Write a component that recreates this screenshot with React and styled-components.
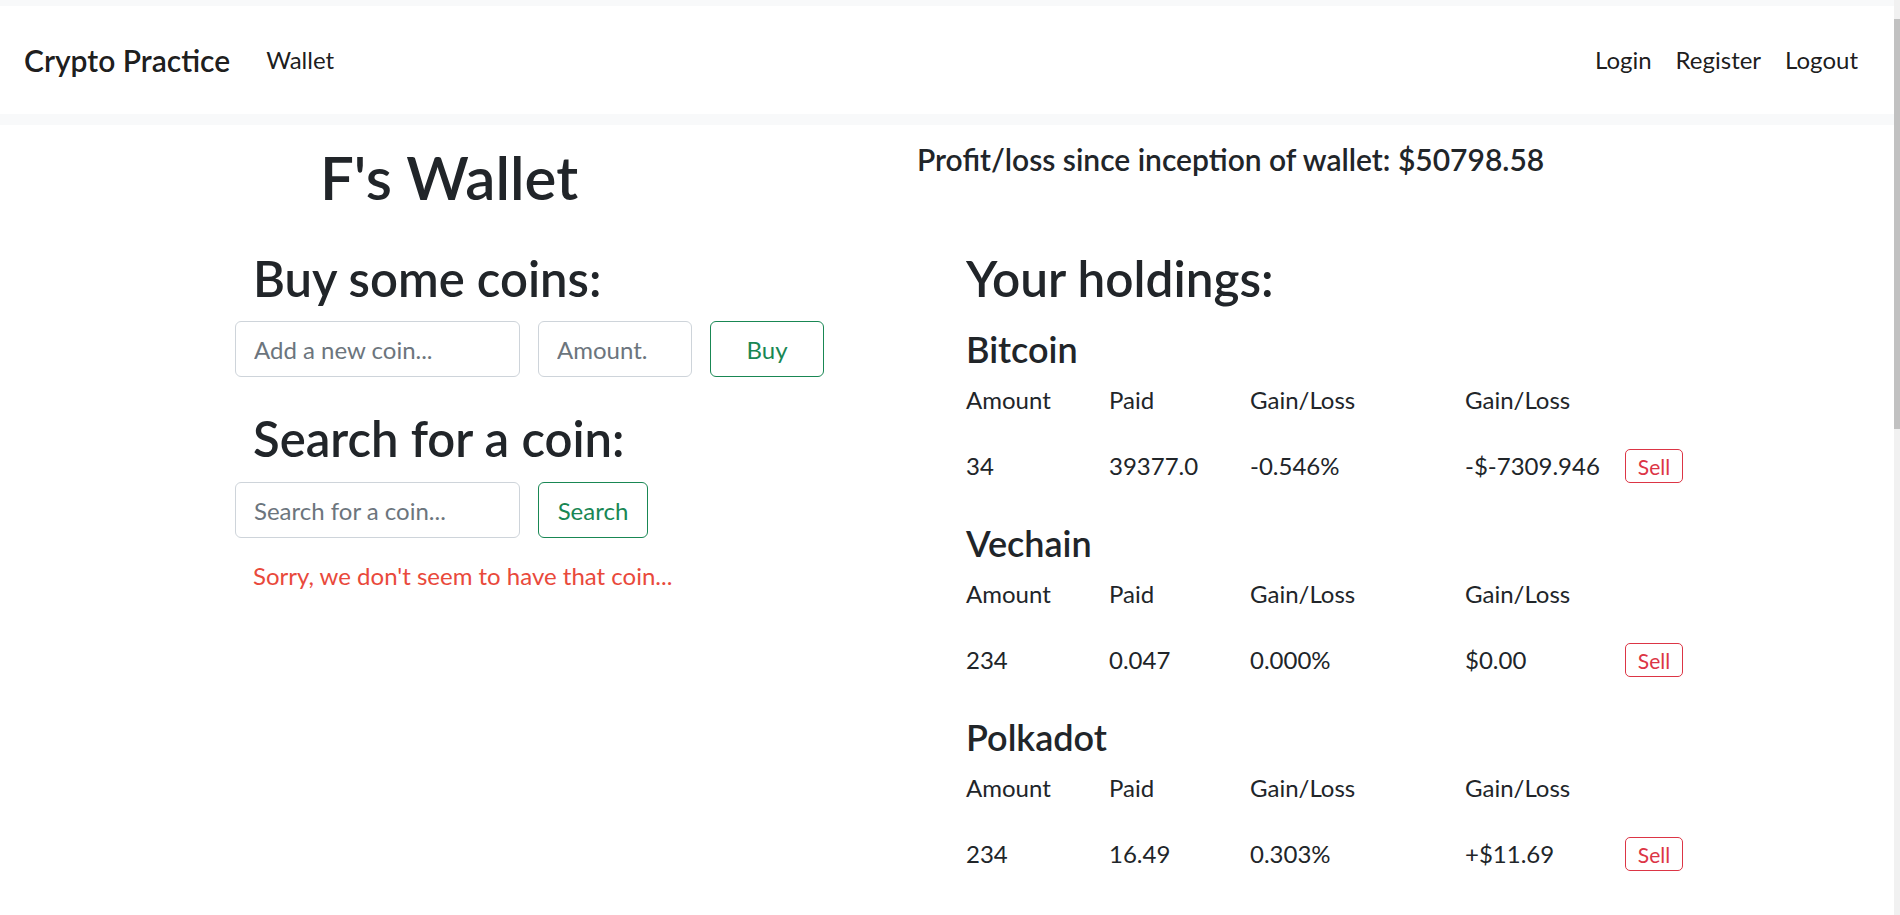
import styled, { createGlobalStyle } from 'styled-components'

const GlobalStyle = createGlobalStyle`
  * { box-sizing: border-box; }
  html, body {
    margin: 0;
    padding: 0;
    background: #fff;
  }
  body {
    font-family: Lato, "Liberation Sans", sans-serif;
    font-size: 24px;
    line-height: 1.5;
    color: #212529;
  }
`

const holdings = [
  { name: 'Bitcoin', amount: '34', paid: '39377.0', pct: '-0.546%', value: '-$-7309.946' },
  { name: 'Vechain', amount: '234', paid: '0.047', pct: '0.000%', value: '$0.00' },
  { name: 'Polkadot', amount: '234', paid: '16.49', pct: '0.303%', value: '+$11.69' }
]

const App = () => {
  return (
    <Page>
      <GlobalStyle />
      <NavOuter>
        <NavBar>
          <NavGroup>
            <Brand>Crypto Practice</Brand>
            <NavLink>Wallet</NavLink>
          </NavGroup>
          <NavGroup>
            <NavLink>Login</NavLink>
            <NavLink>Register</NavLink>
            <NavLink>Logout</NavLink>
          </NavGroup>
        </NavBar>
      </NavOuter>

      <Main>
        <TopRow>
          <TitleCell>
            <Title>F's Wallet</Title>
          </TitleCell>
          <Profit>Profit/loss since inception of wallet: $50798.58</Profit>
        </TopRow>

        <ContentRow>
          <LeftCol>
            <SectionHeading>Buy some coins:</SectionHeading>
            <FormRow>
              <Input placeholder='Add a new coin...' width={285} />
              <Input placeholder='Amount.' width={154} />
              <OutlineButton width={114}>Buy</OutlineButton>
            </FormRow>

            <SectionHeading spaced>Search for a coin:</SectionHeading>
            <FormRow>
              <Input placeholder='Search for a coin...' width={285} />
              <OutlineButton width={110}>Search</OutlineButton>
            </FormRow>
            <ErrorText>Sorry, we don't seem to have that coin...</ErrorText>
          </LeftCol>

          <RightCol>
            <SectionHeading flush>Your holdings:</SectionHeading>
            {holdings.map(coin => (
              <CoinBlock key={coin.name}>
                <CoinName>{coin.name}</CoinName>
                <CoinGrid>
                  <span>Amount</span>
                  <span>Paid</span>
                  <span>Gain/Loss</span>
                  <span>Gain/Loss</span>
                  <span />
                </CoinGrid>
                <CoinGrid data>
                  <span>{coin.amount}</span>
                  <span>{coin.paid}</span>
                  <span>{coin.pct}</span>
                  <span>{coin.value}</span>
                  <SellButton>Sell</SellButton>
                </CoinGrid>
              </CoinBlock>
            ))}
          </RightCol>
        </ContentRow>
      </Main>

      <Scrollbar>
        <Thumb />
      </Scrollbar>
    </Page>
  )
}

const Page = styled.div`
  width: 1894px;
  min-height: 915px;
`

const NavOuter = styled.div`
  background-color: #f8f9fa;
  padding: 6px 0 11px;
`

const NavBar = styled.nav`
  background-color: #fff;
  height: 108px;
  padding: 0 24px;
  display: flex;
  align-items: center;
  justify-content: space-between;
`

const NavGroup = styled.div`
  display: flex;
  align-items: center;
`

const Brand = styled.a`
  font-size: 30px;
  font-weight: 600;
  color: rgba(0, 0, 0, 0.9);
  margin-right: 24px;
`

const NavLink = styled.a`
  font-size: 24px;
  color: rgba(0, 0, 0, 0.9);
  padding: 0 12px;
`

const Main = styled.main`
  padding-top: 16px;
`

const TopRow = styled.div`
  display: flex;
  align-items: flex-start;
  padding-left: 235px;
`

const TitleCell = styled.div`
  width: 428px;
  text-align: center;
`

const Title = styled.h1`
  margin: 0;
  font-size: 60px;
  font-weight: 600;
  line-height: 1.2;
`

const Profit = styled.h5`
  margin: 0 0 0 254px;
  font-size: 30px;
  font-weight: 600;
  line-height: 1.2;
`

const ContentRow = styled.div`
  display: flex;
  align-items: flex-start;
  padding-left: 235px;
  margin-top: 36px;
`

const LeftCol = styled.div`
  width: 731px;
`

const RightCol = styled.div`
  flex: 1;
`

const SectionHeading = styled.h2`
  margin: ${p => (p.spaced ? '32px 0 15px' : p.flush ? '0 0 21px' : '0 0 14px')};
  padding-left: ${p => (p.flush ? '0' : '18px')};
  font-size: ${p => (p.flush ? '49.5px' : '49px')};
  font-weight: 600;
  line-height: 58px;
`

const FormRow = styled.div`
  display: flex;
  gap: 18px;
`

const Input = styled.input`
  width: ${p => p.width}px;
  height: 56px;
  padding: 9px 18px;
  font-family: inherit;
  font-size: 24px;
  color: #212529;
  border: 1px solid #ced4da;
  border-radius: 6px;
  outline: none;

  &::placeholder {
    color: #6c757d;
  }
`

const OutlineButton = styled.button`
  width: ${p => p.width}px;
  height: 56px;
  font-family: inherit;
  font-size: 24px;
  color: #198754;
  background: transparent;
  border: 1px solid #198754;
  border-radius: 6px;
  cursor: pointer;
`

const ErrorText = styled.p`
  margin: 20px 0 0;
  padding-left: 18px;
  font-size: 24px;
  line-height: 36px;
  color: #e9493b;
`

const CoinBlock = styled.section`
  margin-bottom: 32px;
`

const CoinName = styled.h4`
  margin: 0 0 11px;
  font-size: 36px;
  font-weight: 600;
  line-height: 43px;
`

const CoinGrid = styled.div`
  display: grid;
  grid-template-columns: 143px 141px 215px 160px 58px;
  align-items: center;
  height: ${p => (p.data ? '48px' : '36px')};
  margin-top: ${p => (p.data ? '24px' : '0')};
`

const SellButton = styled.button`
  width: 58px;
  height: 34px;
  padding: 0;
  font-family: inherit;
  font-size: 21px;
  color: #dc3545;
  background: transparent;
  border: 1px solid #dc3545;
  border-radius: 5px;
  cursor: pointer;
`

const Scrollbar = styled.div`
  position: fixed;
  top: 0;
  right: 0;
  width: 6px;
  height: 100%;
  background-color: #f1f1f1;
`

const Thumb = styled.div`
  margin-top: 19px;
  height: 410px;
  background-color: #c1c1c1;
`

export default App
